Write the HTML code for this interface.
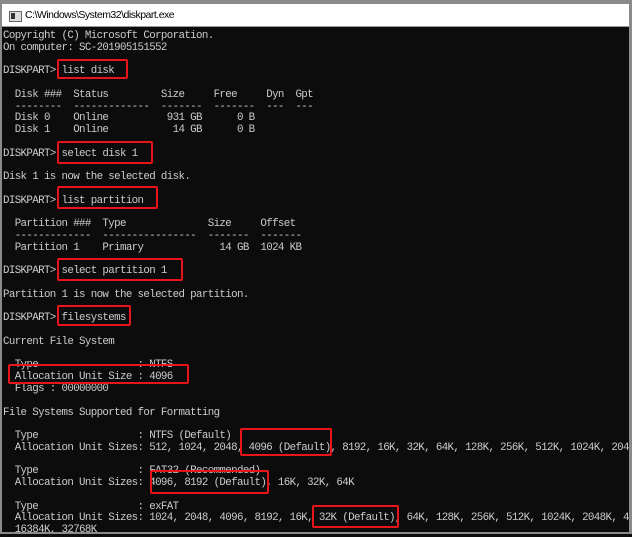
<!DOCTYPE html>
<html><head><meta charset="utf-8"><style>
html,body{margin:0;padding:0;}
body{width:632px;height:534px;overflow:hidden;background:#0c0c0c;position:relative;font-family:"Liberation Mono",monospace;}
.top{position:absolute;left:0;top:0;width:632px;height:4px;background:#8a8a8a;}
.title{position:absolute;left:0;top:4px;width:629px;height:22px;background:#fff;border-bottom:1px solid #9a9a9a;}
.title span{position:absolute;left:25px;top:5px;font:10.5px "Liberation Sans",sans-serif;letter-spacing:-0.5px;color:#000;}
.icon{position:absolute;left:9px;top:7px;width:11px;height:9px;border:1px solid #666;background:#ddd;}
.icon:before{content:"";position:absolute;left:1px;top:1px;width:4px;height:6px;background:#333;}
.lb{position:absolute;left:0;top:4px;width:2px;height:530px;background:#8a8a8a;}
.rb{position:absolute;left:629px;top:0;width:3px;height:534px;background:#8a8a8a;}
.bb{position:absolute;left:0;top:532px;width:632px;height:2px;background:#8a8a8a;}
pre{position:absolute;left:3px;top:31px;margin:0;font-family:"Liberation Mono","Noto Sans CJK SC",monospace;font-size:10.8px;letter-spacing:-0.63px;line-height:11.76px;color:#cccccc;white-space:pre;}
.r{position:absolute;border:2px solid #e8141a;border-radius:2px;box-sizing:border-box;}
</style></head><body>
<div class="title"><div class="icon"></div><span>C:\Windows\System32\diskpart.exe</span></div>
<pre>Copyright (C) Microsoft Corporation.
On computer: SC-201905151552

DISKPART> list disk

  Disk ###  Status         Size     Free     Dyn  Gpt
  --------  -------------  -------  -------  ---  ---
  Disk 0    Online          931 GB      0 B
  Disk 1    Online           14 GB      0 B

DISKPART> select disk 1

Disk 1 is now the selected disk.

DISKPART> list partition

  Partition ###  Type              Size     Offset
  -------------  ----------------  -------  -------
  Partition 1    Primary             14 GB  1024 KB

DISKPART> select partition 1

Partition 1 is now the selected partition.

DISKPART> filesystems

Current File System

  Type                 : NTFS
  Allocation Unit Size : 4096
  Flags : 00000000

File Systems Supported for Formatting

  Type                 : NTFS (Default)
  Allocation Unit Sizes: 512, 1024, 2048, 4096 (Default), 8192, 16K, 32K, 64K, 128K, 256K, 512K, 1024K, 2048K

  Type                 : FAT32 (Recommended)
  Allocation Unit Sizes: 4096, 8192 (Default), 16K, 32K, 64K

  Type                 : exFAT
  Allocation Unit Sizes: 1024, 2048, 4096, 8192, 16K, 32K (Default), 64K, 128K, 256K, 512K, 1024K, 2048K, 4096K
  16384K, 32768K</pre>
<div class="r" style="left:57px;top:59px;width:71px;height:20px"></div>
<div class="r" style="left:57px;top:141px;width:96px;height:23px"></div>
<div class="r" style="left:57px;top:186px;width:101px;height:23px"></div>
<div class="r" style="left:57px;top:258px;width:126px;height:23px"></div>
<div class="r" style="left:57px;top:305px;width:74px;height:21px"></div>
<div class="r" style="left:8px;top:364px;width:181px;height:20px"></div>
<div class="r" style="left:240px;top:428px;width:92px;height:28px"></div>
<div class="r" style="left:150px;top:470px;width:119px;height:24px"></div>
<div class="r" style="left:312px;top:505px;width:87px;height:23px"></div>
<div class="top"></div><div class="lb"></div><div class="rb"></div><div class="bb"></div>
</body></html>
